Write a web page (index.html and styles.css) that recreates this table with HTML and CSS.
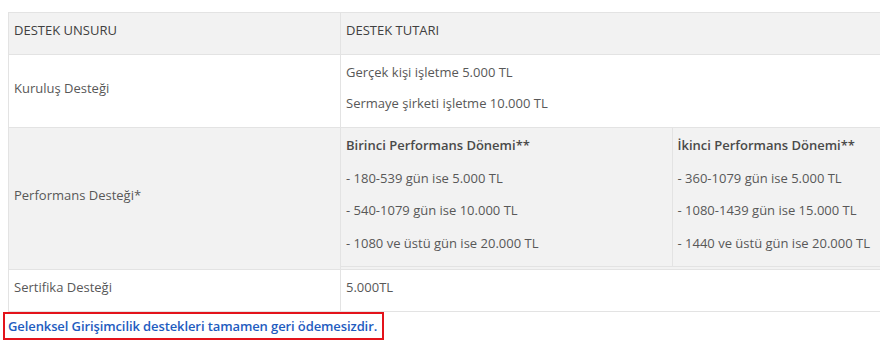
FILE: index.html
```html
<!DOCTYPE html>
<html lang="tr">
<head>
<meta charset="utf-8">
<title>Destek</title>
<link rel="stylesheet" href="styles.css">
</head>
<body>
<div class="page">
  <table class="grid">
    <colgroup><col class="c1"><col></colgroup>
    <tr class="head">
      <td><p>DESTEK UNSURU</p></td>
      <td><p>DESTEK TUTARI</p></td>
    </tr>
    <tr class="white">
      <td class="label"><p>Kuruluş Desteği</p></td>
      <td><p>Gerçek kişi işletme 5.000 TL</p><p>Sermaye şirketi işletme 10.000 TL</p></td>
    </tr>
    <tr class="grey">
      <td class="label"><p>Performans Desteği*</p></td>
      <td class="nestcell">
        <table class="nest">
          <colgroup><col class="n1"><col></colgroup>
          <tr>
            <td>
              <p class="b">Birinci Performans Dönemi**</p>
              <p>- 180-539 gün ise 5.000 TL</p>
              <p>- 540-1079 gün ise 10.000 TL</p>
              <p>- 1080 ve üstü gün ise 20.000 TL</p>
            </td>
            <td>
              <p class="b">İkinci Performans Dönemi**</p>
              <p>- 360-1079 gün ise 5.000 TL</p>
              <p>- 1080-1439 gün ise 15.000 TL</p>
              <p>- 1440 ve üstü gün ise 20.000 TL</p>
            </td>
          </tr>
        </table>
      </td>
    </tr>
    <tr class="white">
      <td class="label"><p>Sertifika Desteği</p></td>
      <td><p>5.000TL</p></td>
    </tr>
  </table>
  <div class="note">Gelenksel Girişimcilik destekleri tamamen geri ödemesizdir.</div>
</div>
</body>
</html>
```
FILE: styles.css
```css
html, body {
  margin: 0;
  padding: 0;
  overflow: hidden;
  background: #fff;
}
body {
  font-family: "Open Sans", "DejaVu Sans", sans-serif;
  font-size: 13px;
  color: #585858;
}
.page {
  padding: 12px 0 0 8px;
  width: 900px;
}
.grid {
  border-collapse: collapse;
  width: 900px;
  table-layout: fixed;
}
.grid .c1 { width: 332px; }
.grid > tbody > tr > td {
  border: 1px solid #e3e3e3;
  padding: 7px 6px 3px 5px;
  vertical-align: middle;
  line-height: 20px;
}
.grid p {
  margin: 0 0 11px;
}
.head td {
  background: #f2f2f2;
  color: #404040;
}
.white td { background: #fff; }
.grey td { background: #f2f2f2; }
.grid > tbody > tr > td.nestcell {
  padding: 0 0 2px 0;
  vertical-align: top;
}
.nest {
  border-collapse: collapse;
  width: 100%;
  table-layout: fixed;
}
.nest .n1 { width: 331px; }
.nest td {
  padding: 7px 6px 1px 5px;
  vertical-align: top;
  border-bottom: 1px solid #e3e3e3;
  line-height: 20px;
}
.nest td:first-child {
  border-right: 1px solid #e3e3e3;
}
.nest p {
  margin: 0 0 12.5px;
}
.nest p.b {
  font-weight: 600;
  color: #4a4a4a;
}
.note {
  width: fit-content;
  margin: 0 0 0 -5px;
  border: 2px solid #e3131b;
  padding: 2px 5px 2px 3px;
  font-weight: 600;
  letter-spacing: -0.1px;
  color: #1f5cbf;
  line-height: 20px;
}
```
